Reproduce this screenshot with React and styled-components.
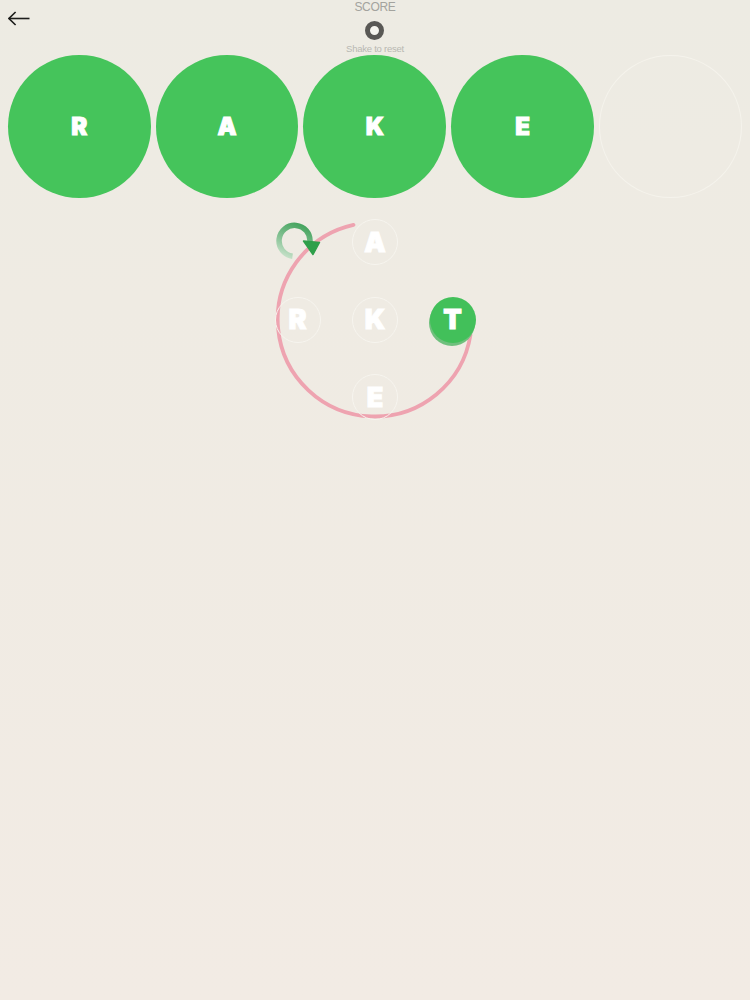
import React from 'react';
import styled, { createGlobalStyle } from 'styled-components';

const GlobalStyle = createGlobalStyle`
  html, body {
    margin: 0;
    padding: 0;
    height: 100%;
  }
  #root {
    height: 100%;
  }
`;

const Page = styled.div`
  width: 750px;
  height: 1000px;
  overflow: hidden;
  display: flex;
  flex-direction: column;
  align-items: center;
  background: linear-gradient(180deg, #edebe3 0%, #efebe3 30%, #f2ebe4 100%);
  font-family: 'Liberation Sans', Arial, sans-serif;
`;

const Header = styled.header`
  width: 100%;
  height: 55px;
  display: grid;
  grid-template-columns: 1fr auto 1fr;
`;

const BackButton = styled.button`
  justify-self: start;
  align-self: start;
  margin: 11px 0 0 8px;
  padding: 0;
  border: 0;
  background: none;
  display: flex;
`;

const Score = styled.div`
  display: flex;
  flex-direction: column;
  align-items: center;
`;

const ScoreLabel = styled.div`
  margin-top: 1px;
  font-size: 12px;
  line-height: 13px;
  letter-spacing: -0.3px;
  color: #a3a39e;
`;

const Ring = styled.div`
  margin-top: 7px;
  width: 19px;
  height: 19px;
  box-sizing: border-box;
  border: 5.5px solid #595855;
  border-radius: 50%;
  background: #f6f5ef;
`;

const ResetHint = styled.div`
  margin-top: 3px;
  font-size: 9.5px;
  line-height: 11px;
  letter-spacing: -0.25px;
  color: #b8b8b2;
`;

const WordRow = styled.div`
  display: flex;
  gap: 5px;
  padding-right: 0.5px;
`;

const Slot = styled.div`
  width: 142.8px;
  height: 143px;
  box-sizing: border-box;
  border-radius: 50%;
  display: flex;
  align-items: center;
  justify-content: center;
  padding-top: 1px;
  background: ${(p) => (p.$empty ? 'transparent' : '#45c45b')};
  border: ${(p) => (p.$empty ? '1px solid #f5f3ec' : 'none')};
`;

const Letter = styled.span`
  font-family: Inter, Roboto, sans-serif;
  font-weight: 900;
  font-size: ${(p) => p.$size}px;
  line-height: 1;
  color: #fff;
  -webkit-text-stroke: 1px #fff;
  paint-order: stroke fill;
  stroke-linejoin: round;
`;

const Board = styled.div`
  position: relative;
  margin-top: 21px;
  display: grid;
  grid-template-columns: repeat(3, 46px);
  grid-auto-rows: 46px;
  gap: 31.5px;
`;

const Cell = styled.div`
  position: relative;
  z-index: 1;
  width: 46px;
  height: 46px;
  box-sizing: border-box;
  border-radius: 50%;
  display: flex;
  align-items: center;
  justify-content: center;
  border: ${(p) => (p.$active ? 'none' : '1px solid #f7f5ef')};
  background: ${(p) => (p.$active ? '#42c05a' : 'transparent')};
  box-shadow: ${(p) => (p.$active ? '-1px 3px 0 #6fc07d' : 'none')};
`;

const PathLayer = styled.svg`
  position: absolute;
  left: -10.5px;
  top: -10px;
  width: 221px;
  height: 221px;
  pointer-events: none;
`;

const BackArrow = () => (
  <svg width="22" height="16" viewBox="0 0 22 16" fill="none" stroke="#1d1d1b" strokeWidth="1.6">
    <path d="M0.8 7.5H21.5" />
    <path d="M7.6 1L1 7.5L7.6 14" />
  </svg>
);

// viewBox is in page coordinates
const TracePath = () => (
  <PathLayer viewBox="264 209 221 221" fill="none">
    <defs>
      <linearGradient id="loop" gradientUnits="userSpaceOnUse" x1="290" y1="258" x2="304" y2="226">
        <stop offset="0" stopColor="#c3dfc6" />
        <stop offset="0.45" stopColor="#84c193" />
        <stop offset="1" stopColor="#46a45f" />
      </linearGradient>
    </defs>
    <path d="M292.5 256.2A15.5 15.5 0 1 1 310 242" stroke="url(#loop)" strokeWidth="5.5" />
    <path
      d="M353.5 224.85A97 97 0 1 0 470.45 335"
      stroke="#eea3b0"
      strokeWidth="3.8"
      strokeLinecap="round"
    />
    <path d="M303.5 241L319.5 242.5L313 254.5Z" fill="#2f9f4a" stroke="#2f9f4a" strokeWidth="1.5" strokeLinejoin="round" />
  </PathLayer>
);

const slots = ['R', 'A', 'K', 'E', ''];

const cells = [
  { id: 'a', letter: '' },
  { id: 'b', letter: 'A' },
  { id: 'c', letter: '' },
  { id: 'd', letter: 'R' },
  { id: 'e', letter: 'K' },
  { id: 'f', letter: 'T', active: true },
  { id: 'g', letter: '' },
  { id: 'h', letter: 'E' },
  { id: 'i', letter: '' },
];

const App = () => {
  return (
    <Page>
      <GlobalStyle />
      <Header>
        <BackButton aria-label="Back">
          <BackArrow />
        </BackButton>
        <Score>
          <ScoreLabel>SCORE</ScoreLabel>
          <Ring />
          <ResetHint>Shake to reset</ResetHint>
        </Score>
      </Header>

      <WordRow>
        {slots.map((el, index) => (
          <Slot key={index} $empty={!el}>
            {el && <Letter $size={24}>{el}</Letter>}
          </Slot>
        ))}
      </WordRow>

      <Board>
        <TracePath />
        {cells.map((el) =>
          el.letter ? (
            <Cell key={el.id} $active={el.active}>
              <Letter $size={27}>{el.letter}</Letter>
            </Cell>
          ) : (
            <div key={el.id} />
          ),
        )}
      </Board>
    </Page>
  );
};

export default App;
